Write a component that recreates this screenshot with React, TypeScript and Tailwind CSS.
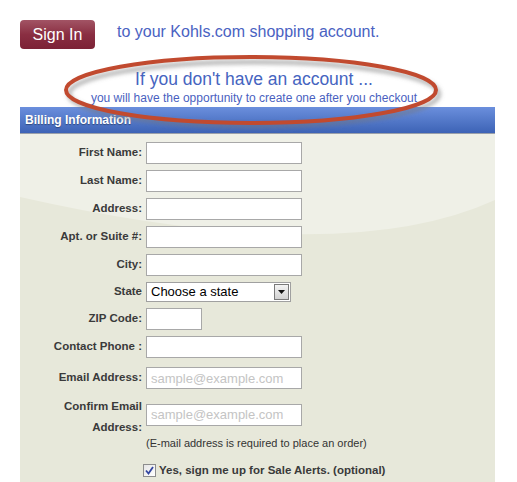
import React from 'react';

const labelCls = 'w-[122px] shrink-0 text-right text-[11.5px] font-bold text-[#3a3a3a]';
const inputCls = 'h-[22px] w-[156px] border border-[#a8a8a8] bg-white px-1 text-[13px] outline-none placeholder:text-[#c4c4c4]';

function Row({ label, className = '', children }: { label: string; className?: string; children?: React.ReactNode }) {
  return (
    <div className={`flex items-center gap-[4px] ${className}`}>
      <div className={labelCls}>{label}</div>
      {children ?? <input className={inputCls} />}
    </div>
  );
}

function Oval() {
  // red hand-drawn ring around the account note
  return (
    <svg className="pointer-events-none absolute left-0 top-0" width="517" height="140" viewBox="0 0 517 140">
      <defs>
        <filter id="blur" x="-10%" y="-30%" width="120%" height="160%">
          <feGaussianBlur stdDeviation="2" />
        </filter>
      </defs>
      <ellipse cx="254" cy="94" rx="185" ry="32" fill="none" stroke="#777" strokeOpacity="0.6" strokeWidth="4" filter="url(#blur)" />
      <ellipse cx="251" cy="90" rx="185" ry="33" fill="none" stroke="#c14a2f" strokeWidth="4" />
    </svg>
  );
}

export default function App() {
  return (
    <div className="relative h-[482px] w-[517px] overflow-hidden bg-white font-['Liberation_Sans',Arial,sans-serif]">
      {/* Sign in line */}
      <div className="flex items-center pl-[20px] pt-[20px]">
        <button className="h-[29px] w-[75px] rounded-[4px] bg-gradient-to-b from-[#a25465] via-[#8a2e42] to-[#7c2236] text-[16px] text-white">
          Sign In
        </button>
        <span className="ml-[22px] -mt-[6px] text-[16px] text-[#4a62c2]">to your Kohls.com shopping account.</span>
      </div>

      {/* account note */}
      <div className="mt-[20px] flex flex-col items-center pr-[9px] text-[#4564c0]">
        <div className="text-[17.5px] leading-[20px]">If you don't have an account ...</div>
        <div className="mt-[2px] text-[12px] leading-[14px] text-[#4a5fc0]">you will have the opportunity to create one after you checkout</div>
      </div>

      {/* Billing panel */}
      <div className="ml-[20px] mt-[2px] w-[475px]">
        <div className="h-[27px] border-b border-[#9aa0aa] bg-gradient-to-b from-[#6b8fdd] to-[#3d63b6] pl-[5px] text-[12px] font-bold leading-[26px] text-white [text-shadow:0_1px_1px_rgba(0,0,0,0.35)]">
          Billing Information
        </div>
        <div className="relative h-[360px] bg-[#e7e8da]">
          <svg className="absolute left-0 top-0" width="475" height="140" viewBox="0 0 475 140">
            <path d="M0,0 H475 V66 Q322,136 0,63 Z" fill="#eff0e7" />
          </svg>
          <div className="relative flex flex-col pt-[8px]">
            <Row label="First Name:" />
            <Row label="Last Name:" className="mt-[6px]" />
            <Row label="Address:" className="mt-[6px]" />
            <Row label="Apt. or Suite #:" className="mt-[6px]" />
            <Row label="City:" className="mt-[6px]" />
            <Row label="State" className="mt-[6px]">
              <div className="flex h-[20px] w-[145px] items-center border border-[#a0a0a0] bg-white">
                <span className="flex-1 pl-[4px] text-[13px] text-black">Choose a state</span>
                <span className="mr-[1px] flex h-[16px] w-[15px] items-center justify-center border border-[#7a7a7a] bg-gradient-to-b from-[#f4f4f4] to-[#d2d2d2]">
                  <svg width="7" height="4" viewBox="0 0 7 4"><path d="M0,0 H7 L3.5,4 Z" fill="#111" /></svg>
                </span>
              </div>
            </Row>
            <Row label="ZIP Code:" className="mt-[6px]">
              <input className="h-[22px] w-[56px] border border-[#a8a8a8] bg-white outline-none" />
            </Row>
            <Row label="Contact Phone :" className="mt-[6px]" />
            <Row label="Email Address:" className="mt-[9px]">
              <input className={inputCls} placeholder="sample@example.com" />
            </Row>
            <div className="mt-[7px] flex items-center gap-[4px]">
              <div className={`${labelCls} leading-[21px]`}>
                Confirm Email
                <br />
                Address:
              </div>
              <input className={`${inputCls} -mt-[5px]`} placeholder="sample@example.com" />
            </div>
            <div className="-mt-[3px] pl-[126px] text-[11px] text-[#333]">(E-mail address is required to place an order)</div>
            <label className="mt-[10px] flex items-center pl-[123px]">
              <span className="flex h-[13px] w-[13px] items-center justify-center border border-[#8d8d8d] bg-gradient-to-br from-[#e6e6e6] to-white">
                <svg width="9" height="9" viewBox="0 0 9 9">
                  <path d="M1,4.5 L3.5,7.5 L8,1" fill="none" stroke="#3346a0" strokeWidth="1.8" />
                </svg>
              </span>
              <span className="ml-[3px] text-[11.5px] font-bold text-[#3a3a3a]">Yes, sign me up for Sale Alerts. (optional)</span>
            </label>
          </div>
        </div>
      </div>

      <Oval />
    </div>
  );
}
